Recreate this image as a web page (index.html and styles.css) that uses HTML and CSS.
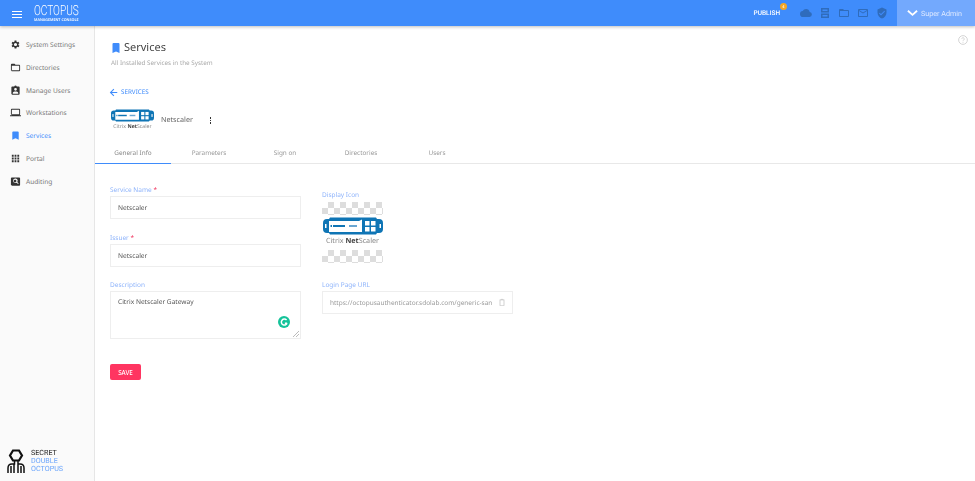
FILE: index.html

```html
<!DOCTYPE html>
<html lang="en">
<head>
    <meta charset="UTF-8">
    <meta name="viewport" content="width=device-width, initial-scale=1.0">
    <title>Services</title>
    <link rel="stylesheet" href="styles.css">
</head>
<body>
    <header class="topbar">
        <div class="menu-btn"><span></span><span></span><span></span></div>
        <div class="brand">
            <div class="brand-name">OCTOPUS</div>
            <div class="brand-sub">MANAGEMENT CONSOLE</div>
        </div>
        <div class="topbar-right">
            <div class="publish">PUBLISH<span class="publish-badge">4</span></div>
            <div class="top-icons">
                <svg width="12" height="12" viewBox="0 0 24 24"><path d="M19.350 10.040A7.490 7.490 0 0 0 12 4a7.500 7.500 0 0 0-6.650 4.040A6 6 0 0 0 6 20h13a5 5 0 0 0 .35-9.960z"/></svg>
                <svg width="12" height="12" viewBox="0 0 24 24"><path d="M4 2h16v9H4zM4 13h16v9H4z M7 5v3h10V5z M7 16v3h10v-3z" fill-rule="evenodd"/></svg>
                <svg width="12" height="12" viewBox="0 0 24 24"><path d="M20 6h-8l-2-2H4a2 2 0 0 0-2 2v12c0 1.100.9 2 2 2h16a2 2 0 0 0 2-2V8a2 2 0 0 0-2-2zm0 12H4V8h16z"/></svg>
                <svg width="12" height="12" viewBox="0 0 24 24"><path d="M20 4H4a2 2 0 0 0-2 2v12c0 1.100.9 2 2 2h16a2 2 0 0 0 2-2V6a2 2 0 0 0-2-2zm0 14H4V8l8 5 8-5zm-8-7L4 6h16z"/></svg>
                <svg width="12" height="12" viewBox="0 0 24 24"><path d="M12 1L3 5v6c0 5.500 3.800 10.700 9 12 5.200-1.300 9-6.500 9-12V5zm-2 16l-4-4 1.400-1.400 2.600 2.600 6.600-6.600L18 9z"/></svg>
            </div>
            <div class="user">
                <svg width="11" height="8" viewBox="0 0 12 8"><path d="M1 1.500l5 4.500 5-4.500" fill="none" stroke="#fff" stroke-width="2"/></svg>
                <span>Super Admin</span>
            </div>
        </div>
    </header>

    <div class="layout">
        <aside class="sidebar">
            <nav class="side-nav">
                <a class="side-item">
                    <svg viewBox="0 0 24 24"><path d="M19.400 13a7.500 7.500 0 0 0 0-2l2.100-1.600-2-3.500-2.500 1a7.500 7.500 0 0 0-1.700-1L15 3.200h-4l-.4 2.700a7.500 7.500 0 0 0-1.700 1l-2.500-1-2 3.500L6.500 11a7.500 7.500 0 0 0 0 2l-2.100 1.600 2 3.500 2.500-1a7.500 7.500 0 0 0 1.700 1l.4 2.700h4l.4-2.700a7.500 7.500 0 0 0 1.700-1l2.500 1 2-3.500zM13 15.500a3.500 3.500 0 1 1 0-7 3.500 3.500 0 0 1 0 7z" transform="translate(-1)"/></svg>
                    System Settings
                </a>
                <a class="side-item">
                    <svg viewBox="0 0 24 24"><path d="M20 6h-8l-2-2H4a2 2 0 0 0-2 2v12c0 1.100.9 2 2 2h16a2 2 0 0 0 2-2V8a2 2 0 0 0-2-2zm0 12H4V8h16z"/></svg>
                    Directories
                </a>
                <a class="side-item">
                    <svg viewBox="0 0 24 24"><path d="M19 3h-4.200a3 3 0 0 0-5.600 0H5a2 2 0 0 0-2 2v14c0 1.100.9 2 2 2h14a2 2 0 0 0 2-2V5a2 2 0 0 0-2-2zm-7 3.500a3 3 0 1 1 0 6 3 3 0 0 1 0-6zM18 19H6v-1.500c0-2 4-3.100 6-3.100s6 1.100 6 3.100z"/></svg>
                    Manage Users
                </a>
                <a class="side-item">
                    <svg viewBox="0 0 24 24"><path d="M20 18a2 2 0 0 0 2-2V6a2 2 0 0 0-2-2H4a2 2 0 0 0-2 2v10c0 1.100.9 2 2 2H0v2h24v-2zM4 6h16v10H4z"/></svg>
                    Workstations
                </a>
                <a class="side-item active">
                    <svg viewBox="0 0 24 24"><path d="M17 3H7a2 2 0 0 0-2 2v16l7-3 7 3V5a2 2 0 0 0-2-2z"/></svg>
                    Services
                </a>
                <a class="side-item">
                    <svg viewBox="0 0 24 24"><path d="M4 8h4V4H4zm6 12h4v-4h-4zm-6 0h4v-4H4zm0-6h4v-4H4zm6 0h4v-4h-4zm6-10v4h4V4zm-6 4h4V4h-4zm6 6h4v-4h-4zm0 6h4v-4h-4z"/></svg>
                    Portal
                </a>
                <a class="side-item">
                    <svg viewBox="0 0 24 24"><path d="M20 3H4a2 2 0 0 0-2 2v14c0 1.100.9 2 2 2h16a2 2 0 0 0 2-2V5a2 2 0 0 0-2-2zm-2.500 14.500l-3-3a5 5 0 1 1 1.400-1.400l3 3zM11 8a3 3 0 1 0 0 6 3 3 0 0 0 0-6z" fill-rule="evenodd"/></svg>
                    Auditing
                </a>
            </nav>
            <div class="side-logo">
                <svg width="18" height="24" viewBox="0 0 18 24"><path d="M6 1.500h6l3 5-3 5H6l-3-5z" fill="none" stroke="#111" stroke-width="2.200"/><path d="M7.500 12v3H5c-2.500 0-4 1.500-4 4v5M11 12v3h2c2.500 0 4 1.500 4 4v5M7 15v9M11 15v9M4 17v7M14 17v7" fill="none" stroke="#111" stroke-width="1.500"/></svg>
                <div class="side-logo-text">
                    <div>SECRET</div>
                    <div class="logo-blue">DOUBLE</div>
                    <div class="logo-blue">OCTOPUS</div>
                </div>
            </div>
        </aside>

        <main class="content">
            <div class="page-head">
                <div>
                    <h1 class="page-title">
                        <svg width="12" height="12" viewBox="0 0 24 24"><path d="M17 2H7a2 2 0 0 0-2 2v18l7-3 7 3V4a2 2 0 0 0-2-2z"/></svg>
                        Services
                    </h1>
                    <p class="page-sub">All Installed Services in the System</p>
                </div>
                <svg class="help" width="10" height="10" viewBox="0 0 24 24"><circle cx="12" cy="12" r="10.500" fill="none" stroke="#ccc" stroke-width="2"/><path d="M9 9.500a3 3 0 1 1 4.500 2.600c-1 .6-1.500 1.200-1.500 2.400M12 16.500v2" fill="none" stroke="#ccc" stroke-width="2"/></svg>
            </div>

            <a class="back-link">
                <svg width="9" height="9" viewBox="0 0 24 24"><path d="M22 10.500H7.500l6.500-6.500L12 2 2 12l10 10 2-2-6.500-6.500H22z"/></svg>
                SERVICES
            </a>

            <div class="service-head">
                <div class="small-logo">
                    <svg width="43" height="13" viewBox="0 0 60 18"><use href="#appliance"/></svg>
                    <div class="small-logo-text">Citrix <b>Net</b>Scaler</div>
                </div>
                <span class="service-name">Netscaler</span>
                <div class="dots"><span></span><span></span><span></span></div>
            </div>

            <div class="tabs">
                <div class="tab active">General Info</div>
                <div class="tab">Parameters</div>
                <div class="tab">Sign on</div>
                <div class="tab">Directories</div>
                <div class="tab">Users</div>
            </div>

            <form class="form">
                <div class="form-cols">
                    <div class="form-col">
                        <div class="field">
                            <label>Service Name <em>*</em></label>
                            <div class="input">Netscaler</div>
                        </div>
                        <div class="field">
                            <label>Issuer <em>*</em></label>
                            <div class="input">Netscaler</div>
                        </div>
                        <div class="field">
                            <label>Description</label>
                            <div class="input textarea">
                                Citrix Netscaler Gateway
                                <span class="grammarly"><svg width="9" height="9" viewBox="0 0 24 24"><path d="M19 14a8 8 0 1 1-1.500-8.500M13 14h6" fill="none" stroke="#fff" stroke-width="4"/></svg></span>
                                <svg class="resize" width="6" height="6" viewBox="0 0 6 6"><path d="M0 6l6-6M3 6l3-3" stroke="#aaa" stroke-width=".8"/></svg>
                            </div>
                        </div>
                    </div>
                    <div class="form-col">
                        <div class="field icon-field">
                            <label>Display Icon</label>
                            <div class="display-icon">
                                <div class="icon-band">
                                    <svg width="60" height="18" viewBox="0 0 60 18">
                                        <g id="appliance">
                                            <path d="M4 2h2l1-1.500h46l1 1.500h2a4 4 0 0 1 4 4v6a4 4 0 0 1-4 4h-2l-1 1.500H7L6 16H4a4 4 0 0 1-4-4V6a4 4 0 0 1 4-4z" fill="#0f75b5"/>
                                            <path d="M6 4h30l3-1.500V15H6z" fill="#fff"/>
                                            <rect x="10" y="8" width="12" height="2" fill="#0f75b5"/>
                                            <rect x="7.500" y="8" width="1.500" height="2" fill="#0f75b5"/>
                                            <rect x="26" y="8" width="8" height="2" fill="#6aa7d2"/>
                                            <rect x="42" y="4" width="4.500" height="4.500" fill="#fff"/>
                                            <rect x="48" y="4" width="4.500" height="4.500" fill="#fff"/>
                                            <rect x="42" y="10" width="4.500" height="4.500" fill="#fff"/>
                                            <rect x="48" y="10" width="4.500" height="4.500" fill="#fff"/>
                                            <rect x="2" y="7" width="1.500" height="4" fill="#fff"/>
                                            <rect x="56.500" y="7" width="1.500" height="4" fill="#fff"/>
                                        </g>
                                    </svg>
                                    <div class="icon-band-text">Citrix <b>Net</b>Scaler</div>
                                </div>
                            </div>
                        </div>
                        <div class="field">
                            <label>Login Page URL</label>
                            <div class="input url">
                                <span>https://octopusauthenticator.sdolab.com/generic-san</span>
                                <svg width="8" height="9" viewBox="0 0 24 24"><path d="M19 3h-4.200a3 3 0 0 0-5.600 0H5v19h14zM12 2.500a1 1 0 1 1 0 2 1 1 0 0 1 0-2zM7 5h10v15H7z" fill="#bbb"/></svg>
                            </div>
                        </div>
                    </div>
                </div>
                <button class="save" type="button">SAVE</button>
            </form>
        </main>
    </div>
</body>
</html>
```

FILE: styles.css

```css
* {
    box-sizing: border-box;
}

html, body {
    height: 100%;
}

body {
    margin: 0;
    height: 481px;
    overflow: hidden;
    font-family: "Noto Sans", "Open Sans", sans-serif;
    text-rendering: geometricPrecision;
    color: #555;
    background-color: #fff;
    display: flex;
    flex-direction: column;
    filter: blur(0.3px);
}

.topbar {
    height: 26px;
    flex: none;
    background-color: #3f8cfb;
    display: flex;
    align-items: center;
    padding-left: 12px;
    box-shadow: 0 1px 3px rgba(0, 0, 0, 0.25);
    position: relative;
}

.menu-btn {
    width: 10px;
    display: flex;
    flex-direction: column;
    gap: 2px;
    margin-top: 2px;
}

.menu-btn span {
    height: 1px;
    background-color: #fff;
}

.brand {
    margin: 1px 0 0 12px;
    color: #fff;
    width: 46px;
}

.brand-name {
    font-family: "Roboto", sans-serif;
    font-weight: 300;
    font-size: 14px;
    line-height: 13px;
    transform: scaleX(0.72);
    transform-origin: left;
    white-space: nowrap;
}

.brand-sub {
    font-size: 3.700px;
    line-height: 5px;
    font-weight: 600;
    white-space: nowrap;
}

.topbar-right {
    margin-left: auto;
    display: flex;
    align-items: center;
    height: 100%;
}

.publish {
    position: relative;
    font-family: "Roboto", sans-serif;
    font-size: 6.500px;
    font-weight: 500;
    color: #fff;
}

.publish-badge {
    position: absolute;
    top: -6px;
    right: -7px;
    width: 7px;
    height: 7px;
    border-radius: 50%;
    background-color: #f5a623;
    font-size: 4px;
    line-height: 7px;
    text-align: center;
}

.top-icons {
    display: flex;
    gap: 7px;
    margin-left: 20px;
    width: 97px;
}

.top-icons svg {
    fill: #2f6cbc;
}

.user {
    width: 78px;
    height: 100%;
    background-color: #73a9fd;
    display: flex;
    align-items: center;
    padding-left: 10px;
    gap: 3px;
    color: #dfeaff;
    font-size: 7.200px;
    font-family: "Roboto", sans-serif;
}

.layout {
    flex: 1;
    display: flex;
    min-height: 0;
}

.sidebar {
    width: 95px;
    flex: none;
    background-color: #fafafa;
    border-right: 1px solid #e6e6e6;
    display: flex;
    flex-direction: column;
    justify-content: space-between;
    padding-top: 7px;
}

.side-nav {
    display: flex;
    flex-direction: column;
}

.side-item {
    height: 22.850px;
    display: flex;
    align-items: center;
    padding-left: 10px;
    gap: 5px;
    font-size: 6.600px;
    color: #777;
}

.side-item svg {
    width: 11px;
    height: 11px;
    fill: #333;
}

.side-item.active {
    color: #3f8cfb;
}

.side-item.active svg {
    fill: #3f8cfb;
}

.side-logo {
    display: flex;
    align-items: center;
    gap: 6px;
    padding: 0 0 8px 7px;
}

.side-logo-text {
    font-family: "Roboto", sans-serif;
    font-size: 7.200px;
    line-height: 8px;
    color: #222;
}

.logo-blue {
    color: #6ba5fb;
}

.content {
    flex: 1;
    min-width: 0;
    display: flex;
    flex-direction: column;
}

.page-head {
    display: flex;
    justify-content: space-between;
    padding: 15px 7px 0 16px;
}

.page-title {
    margin: 0;
    font-weight: 400;
    font-size: 11px;
    line-height: 14px;
    color: #444;
    display: flex;
    align-items: center;
    gap: 2px;
}

.page-title svg {
    fill: #3f8cfb;
    margin-left: -1px;
}

.page-sub {
    margin: 3px 0 0;
    font-size: 6.300px;
    line-height: 10px;
    color: #aaa;
}

.help {
    margin-top: -6px;
}

.back-link {
    margin: 19px 0 0 14px;
    display: flex;
    align-items: center;
    gap: 3px;
    font-size: 6.300px;
    line-height: 10px;
    color: #3f8cfb;
}

.back-link svg {
    fill: #3f8cfb;
}

.service-head {
    height: 27px;
    margin: 9px 0 0 16px;
    display: flex;
    align-items: center;
}

.small-logo {
    width: 43px;
    display: flex;
    flex-direction: column;
    align-items: center;
}

.small-logo-text {
    font-size: 5.200px;
    line-height: 8px;
    color: #888;
    white-space: nowrap;
}

.small-logo-text b, .icon-band-text b {
    color: #444;
}

.service-name {
    margin: 1px 0 0 7px;
    font-size: 7.200px;
    color: #666;
}

.dots {
    margin: 2px 0 0 17px;
    display: flex;
    flex-direction: column;
    gap: 1px;
}

.dots span {
    width: 1.500px;
    height: 1.500px;
    background-color: #333;
}

.tabs {
    margin-top: 7px;
    height: 24px;
    display: flex;
    border-bottom: 1px solid #e8e8e8;
}

.tab {
    width: 76px;
    height: 24px;
    padding-top: 2px;
    font-size: 6.400px;
    line-height: 22px;
    text-align: center;
    color: #999;
}

.tab.active {
    color: #888;
    border-bottom: 1px solid #3f8cfb;
}

.form {
    padding: 21px 0 0 15px;
}

.form-cols {
    display: flex;
    gap: 21px;
}

.form-col {
    width: 191px;
    display: flex;
    flex-direction: column;
}

.field {
    margin-bottom: 13.500px;
}

.field label {
    display: block;
    font-size: 6.500px;
    line-height: 10px;
    color: #8fb4fb;
}

.field label em {
    color: #f0365f;
    font-style: normal;
}

.input {
    height: 23px;
    margin-top: 1px;
    border: 1px solid #eee;
    padding: 0 7px;
    font-size: 6.600px;
    line-height: 21px;
    color: #555;
}

.textarea {
    height: 48px;
    line-height: 10px;
    padding-top: 5px;
    position: relative;
}

.grammarly {
    position: absolute;
    right: 10px;
    bottom: 10px;
    width: 12px;
    height: 12px;
    border-radius: 50%;
    background-color: #15c39a;
    display: flex;
    align-items: center;
    justify-content: center;
}

.resize {
    position: absolute;
    right: 1px;
    bottom: 1px;
}

.icon-field {
    margin-top: 5px;
    margin-bottom: 17px;
}

.display-icon {
    width: 61px;
    height: 61px;
    margin-top: 2px;
    display: flex;
    align-items: center;
    background-color: #fff;
    background-image: conic-gradient(#ddd 25%, #fff 25% 50%, #ddd 50% 75%, #fff 75%);
    background-size: 12px 12px;
}

.icon-band {
    width: 61px;
    height: 35px;
    padding-top: 2px;
    background-color: #fff;
    display: flex;
    flex-direction: column;
    align-items: center;
}

.icon-band-text {
    font-size: 7.200px;
    line-height: 13px;
    color: #888;
    white-space: nowrap;
}

.url {
    display: flex;
    align-items: center;
    justify-content: space-between;
    color: #999;
    white-space: nowrap;
    padding-right: 6px;
}

.url span {
    font-size: 6.500px;
    width: 163px;
}

.save {
    margin-top: 11.500px;
    display: block;
    width: 31px;
    height: 16px;
    padding: 0;
    border: none;
    border-radius: 2px;
    background-color: #ff3561;
    color: #fff;
    font-family: inherit;
    font-size: 6.300px;
    font-weight: 500;
}
```
